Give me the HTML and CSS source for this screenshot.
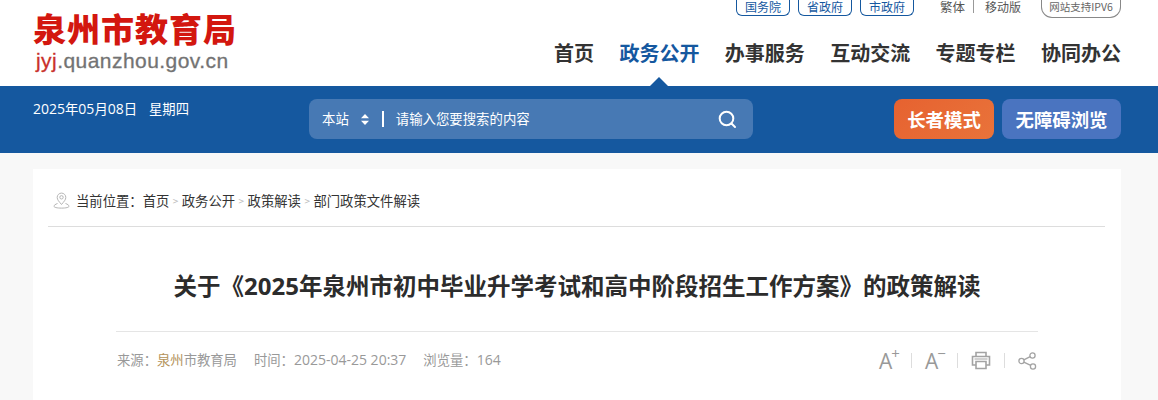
FILE: index.html
```html
<!DOCTYPE html>
<html lang="zh-CN">
<head>
  <meta charset="UTF-8" />
  <title>泉州市教育局</title>
  <link rel="stylesheet" href="styles.css">
</head>
<body>

  <div class="header wrap">
    <div class="logo">
      <div class="logo-name">泉州市教育局</div>
      <div class="logo-url"><span>jyj</span>.quanzhou.gov.cn</div>
    </div>
    <div class="header-right">
      <div class="top-links">
        <a class="tag">国务院</a>
        <a class="tag">省政府</a>
        <a class="tag">市政府</a>
        <a class="plain lang">繁体</a>
        <a class="plain">移动版</a>
        <span class="ipv6">网站支持IPV6</span>
      </div>
      <ul class="nav">
        <li>首页</li>
        <li class="active">政务公开</li>
        <li>办事服务</li>
        <li>互动交流</li>
        <li>专题专栏</li>
        <li>协同办公</li>
      </ul>
    </div>
  </div>

  <div class="band">
    <div class="band-inner wrap">
      <div class="date"><span class="num">2025</span>年<span class="num">05</span>月<span class="num">08</span>日<span class="week">星期四</span></div>
      <div class="search">
        <span class="scope">本站</span>
        <svg class="updown" width="8" height="11" viewBox="0 0 8 11"><path d="M4 0 8 4.300H0zM4 11 0 6.700h8z" fill="#fff"/></svg>
        <span class="divider"></span>
        <span class="placeholder">请输入您要搜索的内容</span>
        <svg class="glass" width="20" height="20" viewBox="0 0 20 20" fill="none" stroke="#fff" stroke-width="2"><circle cx="9.500" cy="9.500" r="6.800"/><path d="M14.500 14.500 18 18" stroke-linecap="round"/></svg>
      </div>
      <a class="btn btn-old">长者模式</a>
      <a class="btn btn-access">无障碍浏览</a>
    </div>
  </div>

  <div class="card wrap">
    <div class="crumbs">
      <svg class="pin" width="17" height="17" viewBox="0 0 17 17" fill="none" stroke="#b5b5b5" stroke-width="1"><path d="M8.500 12.500C6 9.500 4.200 7.800 4.200 5.400a4.300 4.300 0 0 1 8.600 0c0 2.400-1.800 4.100-4.300 7.100z"/><circle cx="8.500" cy="5.300" r="1.700"/><path d="M4.500 11.500C2.500 12.200 1 13.200 1 14.200c0 1.200 3 1.900 7.500 1.900s7.500-.7 7.500-1.900c0-1-1.500-2-3.500-2.700"/></svg>
      <span>当前位置：</span>
      <a>首页</a><i>&gt;</i><a>政务公开</a><i>&gt;</i><a>政策解读</a><i>&gt;</i><a>部门政策文件解读</a>
    </div>
    <div class="article">
      <h1>关于《<span class="num">2025</span>年泉州市初中毕业升学考试和高中阶段招生工作方案》的政策解读</h1>
      <div class="meta">
        <div class="info">
          <span>来源：<em>泉州</em>市教育局</span>
          <span>时间：<span class="num">2025-04-25 20:37</span></span>
          <span>浏览量：<span class="num">164</span></span>
        </div>
        <div class="tools">
          <span class="font-btn">A<b>+</b></span>
          <span class="sep"></span>
          <span class="font-btn">A<b>−</b></span>
          <span class="sep"></span>
          <svg width="20" height="19" viewBox="0 0 20 19" fill="none" stroke="#a3a3a3" stroke-width="1.600"><path d="M5 5V1.500h10V5"/><path d="M5 14H1.500V5.500h17V14H15"/><path d="M5 10.500h10v7H5z"/><path d="M3.500 8h13" stroke-width="1"/></svg>
          <span class="sep"></span>
          <svg width="19" height="18" viewBox="0 0 19 18" fill="none" stroke="#a3a3a3" stroke-width="1.300"><circle cx="3.500" cy="9" r="2.600"/><circle cx="14.500" cy="3.500" r="2.600"/><circle cx="15" cy="14.500" r="2.600"/><path d="M5.800 7.800 12.200 4.600M5.800 10.200 12.700 13.400"/></svg>
        </div>
      </div>
    </div>
  </div>

</body>
</html>
```

FILE: styles.css
```css
* {
  box-sizing: border-box;
}

html, body {
  height: 400px;
  overflow: hidden;
}

body {
  margin: 0;
  padding: 0;
  font-family: "Noto Sans CJK SC", "Open Sans", sans-serif;
  background: #f8f8f8;
  color: #333;
}

a {
  color: inherit;
  text-decoration: none;
}

.wrap {
  width: 1088px;
  margin-left: 33px;
}

.num {
  font-family: "Open Sans", sans-serif;
  font-size: 14px;
}

/* === Topo === */
.header {
  height: 86px;
  display: flex;
  justify-content: space-between;
}

.header::before {
  content: "";
  position: absolute;
  top: 0;
  left: 0;
  right: 0;
  height: 86px;
  background: #fff;
  z-index: -1;
}

.logo {
  padding-top: 8px;
}

.logo-name {
  font-size: 33px;
  font-weight: 900;
  line-height: 40px;
  letter-spacing: 1px;
  color: #d3170f;
  white-space: nowrap;
}

.logo-url {
  font-family: "Liberation Sans", sans-serif;
  font-size: 21px;
  line-height: 24px;
  margin-top: 1px;
  padding-left: 3px;
  color: #737373;
  letter-spacing: 0.45px;
  -webkit-text-stroke: 0.3px;
}

.logo-url span {
  color: #c9302a;
}

.header-right {
  display: flex;
  flex-direction: column;
  align-items: flex-end;
}

.top-links {
  display: flex;
  align-items: flex-start;
  height: 16px;
  font-size: 12px;
  line-height: 13px;
}

.tag {
  width: 54px;
  height: 16px;
  margin-right: 8px;
  border: 1px solid #15589f;
  border-top: none;
  border-radius: 0 0 6px 6px;
  color: #15589f;
  text-align: center;
}

.plain {
  color: #555;
}

.lang {
  margin-left: 18px;
  padding-right: 8px;
  margin-right: 11px;
  font-size: 12.5px;
  border-right: 1px solid #999;
}

.ipv6 {
  width: 80px;
  height: 18px;
  margin-left: 20px;
  border: 1px solid #888;
  border-top: none;
  border-radius: 0 0 11px 11px;
  text-align: center;
  font-size: 10.5px;
  color: #666;
}

.nav {
  list-style: none;
  margin: 17px 0 0;
  padding: 0;
  display: flex;
  gap: 25.4px;
  font-size: 20px;
  font-weight: 700;
  line-height: 40px;
  color: #333;
}

.nav .active {
  position: relative;
  color: #15589f;
}

.nav .active::after {
  content: "";
  position: absolute;
  left: 31px;
  bottom: -13px;
  border: 9px solid transparent;
  border-top: 0;
  border-bottom-color: #15589f;
}

/* === Faixa azul === */
.band {
  height: 67px;
  background: #15589f;
}

.band-inner {
  display: flex;
  align-items: flex-start;
  padding-top: 13px;
}

.date {
  width: 276px;
  font-size: 13.33px;
  line-height: 20px;
  color: #fff;
}

.week {
  margin-left: 12px;
}

.search {
  width: 444px;
  height: 40px;
  border-radius: 8px;
  background: #4779b4;
  display: flex;
  align-items: center;
  padding: 0 16px 0 13px;
  color: #fff;
  font-size: 13.4px;
}

.scope,
.placeholder {
  margin-bottom: 3px;
}

.updown {
  margin-left: 12px;
}

.divider {
  width: 2px;
  height: 16px;
  margin: 0 12px 0 13px;
  background: #fff;
}

.placeholder {
  flex: 1;
}

.btn {
  height: 40px;
  border-radius: 8px;
  color: #fff;
  font-size: 18.4px;
  font-weight: 700;
  line-height: 40px;
  text-align: center;
}

.btn-old {
  width: 100px;
  margin-left: 141px;
  background: linear-gradient(135deg, #e66230, #e9733a);
}

.btn-access {
  width: 119px;
  margin-left: 8px;
  background: #4a74c0;
}

/* === Conteúdo === */
.card {
  margin-top: 16px;
  height: 231px;
  background: #fff;
  padding: 0 16px 0 15px;
}

.crumbs {
  height: 58px;
  display: flex;
  align-items: center;
  border-bottom: 1px solid #ddd;
  padding: 5px 0 0 5px;
  font-size: 13.33px;
  color: #333;
}

.pin {
  margin-right: 6px;
}

.crumbs i {
  width: 12.5px;
  font-style: normal;
  font-size: 10px;
  text-align: center;
  color: #bbb;
}

.article {
  padding: 0 67px 0 68px;
}

h1 {
  margin: 0;
  height: 105px;
  padding-top: 42px;
  font-size: 23.5px;
  font-weight: 700;
  line-height: 32px;
  text-align: center;
  color: #2c2c2c;
  border-bottom: 1px solid #e5e5e5;
}

h1 .num {
  font-size: 24px;
}

.meta {
  display: flex;
  justify-content: space-between;
  align-items: center;
  height: 54px;
  padding: 0 1px;
}

.info {
  display: flex;
  gap: 17px;
  font-size: 13.33px;
  color: #999;
}

.info em {
  font-style: normal;
  color: #b4935a;
}

.tools {
  display: flex;
  align-items: center;
  margin-top: 3px;
  color: #999;
}

.sep {
  width: 1px;
  height: 15px;
  margin: 0 13px;
  background: #ddd;
}

.font-btn {
  width: 19px;
  font-family: "Open Sans", sans-serif;
  font-size: 21px;
  line-height: 20px;
  white-space: nowrap;
}

.font-btn b {
  position: absolute;
  margin-top: -5px;
  margin-left: -1px;
  font-size: 15px;
  line-height: 15px;
  font-weight: 400;
}
```
